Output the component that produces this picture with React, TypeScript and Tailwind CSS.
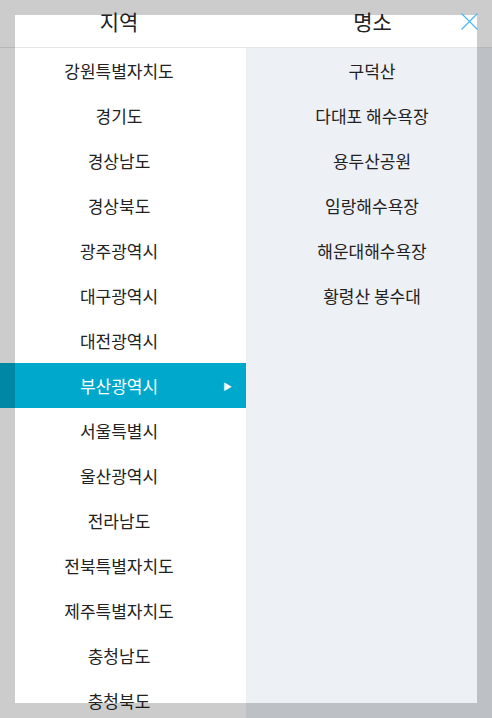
const regions = [
  "강원특별자치도",
  "경기도",
  "경상남도",
  "경상북도",
  "광주광역시",
  "대구광역시",
  "대전광역시",
  "부산광역시",
  "서울특별시",
  "울산광역시",
  "전라남도",
  "전북특별자치도",
  "제주특별자치도",
  "충청남도",
  "충청북도",
];

const spots = ["구덕산", "다대포 해수욕장", "용두산공원", "임랑해수욕장", "해운대해수욕장", "황령산 봉수대"];

const App = () => {
  const selected = "부산광역시";
  return (
    <div className="relative w-full bg-white text-[#222] font-['Noto_Sans_CJK_KR','Noto_Sans',sans-serif]">
      <header className="flex h-[48px] border-b border-[#e6e6e6] bg-white">
        <div className="w-1/2 pr-[8px] pt-[6px] text-center text-[21px] leading-[30px]">지역</div>
        <div className="w-1/2 pl-[7px] pt-[6px] text-center text-[21px] leading-[30px]">명소</div>
      </header>
      <div className="flex">
        <ul className="w-1/2 bg-white">
          {regions.map((r) =>
            r === selected ? (
              <li key={r} className="relative flex h-[45px] items-center justify-center bg-[#00a9cc] pr-[8px] text-[17px] text-white">
                {r}
                <span className="absolute right-[14px] top-1/2 -translate-y-1/2 text-[9px] leading-none">▶</span>
              </li>
            ) : (
              <li key={r} className="flex h-[45px] items-center justify-center pr-[8px] text-[17px]">
                {r}
              </li>
            )
          )}
        </ul>
        <ul className="w-1/2 bg-[#edf0f5]">
          {spots.map((s) => (
            <li key={s} className="flex h-[45px] items-center justify-center pl-[6px] text-[17px]">
              {s}
            </li>
          ))}
        </ul>
      </div>
      <div className="pointer-events-none fixed inset-0 border-[15px] border-black/20" />
      <button className="fixed right-[14px] top-[13px] h-[17px] w-[17px]">
        <svg viewBox="0 0 17 17" width="17" height="17">
          <path d="M0.5 0.5 L16.5 16.5 M16.5 0.5 L0.5 16.5" stroke="#4db8ef" strokeWidth="1.2" fill="none" />
        </svg>
      </button>
    </div>
  );
};

export default App;
